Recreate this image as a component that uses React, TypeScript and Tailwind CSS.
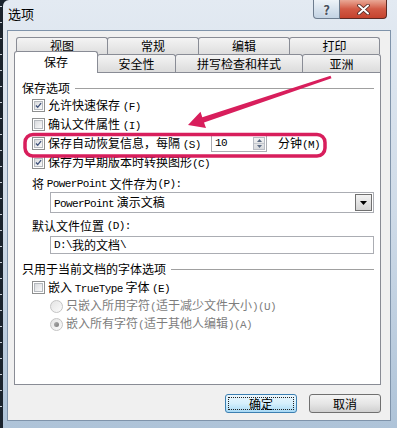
import type { ReactNode } from "react";

const ROW1 = [
  { label: "视图", w: 92 },
  { label: "常规", w: 92 },
  { label: "编辑", w: 92 },
  { label: "打印", w: 91 },
];

const ROW2 = [
  { label: "保存", w: 84, active: true },
  { label: "安全性", w: 79 },
  { label: "拼写检查和样式", w: 128 },
  { label: "亚洲", w: 79 },
];

// latin runs in the dialog font are half width (6px per char at 12px)
function Mono({ children }: { children: ReactNode }) {
  return <span className="font-['Liberation_Mono',monospace] text-[11px] tracking-[-0.6px]">{children}</span>;
}

function Checkbox({ checked }: { checked?: boolean }) {
  return (
    <span className="flex h-[13px] w-[13px] shrink-0 items-center justify-center border border-[#8e8f8f] bg-white">
      <span className="flex h-[9px] w-[9px] items-center justify-center border border-[#b5b9be] bg-gradient-to-br from-[#d9dbde] to-[#fafafa]">
        {checked && (
          <svg width="9" height="9" viewBox="0 0 9 9">
            <path d="M1.2 4.4 L3.5 6.8 L7.8 1.4" fill="none" stroke="#3f527a" strokeWidth="1.7" />
          </svg>
        )}
      </span>
    </span>
  );
}

function Radio({ selected }: { selected?: boolean }) {
  return (
    <span className="flex h-[13px] w-[13px] shrink-0 items-center justify-center rounded-full border border-[#c4c4c4] bg-gradient-to-br from-[#e4e4e4] to-[#fbfbfb]">
      {selected && <span className="h-[5px] w-[5px] rounded-full bg-gradient-to-br from-[#b0b0b0] to-[#7c7c7c]" />}
    </span>
  );
}

function CheckRow({ checked, children }: { checked?: boolean; children: ReactNode }) {
  return (
    <div className="flex h-[19px] items-center pl-[17px]">
      <Checkbox checked={checked} />
      <div className="ml-[3px] flex items-center">{children}</div>
    </div>
  );
}

function GroupLabel({ children }: { children: ReactNode }) {
  return (
    <div className="flex h-[16px] items-center gap-[5px] pl-[7px] pr-[6px]">
      <span>{children}</span>
      <span className="h-px flex-1 bg-[#a0a0a0]" />
    </div>
  );
}

function TitleBar() {
  return (
    <div className="flex h-[30px] items-start justify-between">
      <span className="mt-[7px] pl-[5px] text-[13px]">选项</span>
      <div className="mr-[10px] flex h-[19px]">
        <div className="flex w-[27px] items-center justify-center rounded-bl-[4px] border border-t-0 border-[#6d7c8e] bg-gradient-to-b from-[#eef3f8] via-[#d7e2ed] to-[#c3d3e3]">
          <span className="text-[13px] font-bold leading-none text-[#47505c] [text-shadow:0_0_2px_white]">?</span>
        </div>
        <div className="flex w-[47px] items-center justify-center rounded-br-[4px] border border-l-0 border-t-0 border-[#5b2a24] bg-gradient-to-b from-[#e9a896] via-[#d25a45] to-[#c4432e]">
          <svg width="13" height="11" viewBox="0 0 13 11">
            <path d="M2 1.5 L11 9.5 M11 1.5 L2 9.5" stroke="#4a2520" strokeWidth="3.6" strokeLinecap="round" />
            <path d="M2 1.5 L11 9.5 M11 1.5 L2 9.5" stroke="#ffffff" strokeWidth="2" strokeLinecap="round" />
          </svg>
        </div>
      </div>
    </div>
  );
}

function Tabs() {
  return (
    <div className="w-[367px]">
      <div className="ml-[2px] flex h-[17px]">
        {ROW1.map((tab, i) => (
          <div
            key={tab.label}
            style={{ width: tab.w }}
            className={`flex items-center justify-center rounded-t-[3px] border border-b-0 border-[#898c95] bg-gradient-to-b from-[#f4f4f4] to-[#dedede] ${
              i > 0 ? "-ml-px" : ""
            }`}
          >
            {tab.label}
          </div>
        ))}
      </div>
      <div className="flex h-[18px] items-start">
        {ROW2.map((tab, i) =>
          tab.active ? (
            <div
              key={tab.label}
              style={{ width: tab.w }}
              className="relative z-10 -mt-[3px] flex h-[22px] items-center justify-center rounded-t-[3px] border border-b-0 border-[#898c95] bg-white pb-[1px]"
            >
              {tab.label}
            </div>
          ) : (
            <div
              key={tab.label}
              style={{ width: tab.w }}
              className={`flex h-[18px] items-center justify-center rounded-t-[3px] border border-b-0 border-[#898c95] bg-gradient-to-b from-[#f4f4f4] to-[#dcdcdc] ${
                i > 0 ? "-ml-px" : ""
              }`}
            >
              {tab.label}
            </div>
          ),
        )}
      </div>
    </div>
  );
}

function Panel() {
  return (
    <div className="flex h-[313px] w-[367px] flex-col border border-[#898c95] bg-white pt-[7px]">
      <GroupLabel>保存选项</GroupLabel>
      <CheckRow checked>
        <span>
          允许快速保存 <Mono>(F)</Mono>
        </span>
      </CheckRow>
      <CheckRow>
        <span>
          确认文件属性 <Mono>(I)</Mono>
        </span>
      </CheckRow>
      <CheckRow checked>
        <span className="w-[163px] shrink-0">
          保存自动恢复信息，每隔 <Mono>(S)</Mono>
        </span>
        <div className="flex h-[17px] w-[56px] shrink-0 items-stretch border border-[#abadb3] bg-white">
          <span className="flex flex-1 items-center pl-[3px]">
            <Mono>10</Mono>
          </span>
          <div className="my-px mr-px flex w-[12px] flex-col border border-[#b8bcc4] bg-gradient-to-b from-[#f2f2f2] to-[#d8dadd]">
            <span className="flex flex-1 items-center justify-center border-b border-[#c4c8ce]">
              <svg width="5" height="3" viewBox="0 0 5 3">
                <path d="M0 3 L2.5 0 L5 3 Z" fill="#5b6b84" />
              </svg>
            </span>
            <span className="flex flex-1 items-center justify-center">
              <svg width="5" height="3" viewBox="0 0 5 3">
                <path d="M0 0 L2.5 3 L5 0 Z" fill="#5b6b84" />
              </svg>
            </span>
          </div>
        </div>
        <span className="ml-[11px] shrink-0 whitespace-nowrap">
          分钟<Mono>(M)</Mono>
        </span>
      </CheckRow>
      <CheckRow checked>
        <span>
          保存为早期版本时转换图形<Mono>(C)</Mono>
        </span>
      </CheckRow>

      <div className="mt-[4px] flex h-[16px] items-center pl-[17px]">
        将&nbsp;<Mono>PowerPoint</Mono>&nbsp;文件存为<Mono>(P):</Mono>
      </div>
      <div className="ml-[35px] flex h-[21px] w-[324px] items-center border border-[#abadb3] bg-white pl-[3px] pr-px">
        <span className="flex-1">
          <Mono>PowerPoint</Mono> 演示文稿
        </span>
        <span className="flex h-[17px] w-[17px] items-center justify-center border border-[#707070] bg-gradient-to-b from-[#f3f3f3] to-[#d4d4d4]">
          <svg width="7" height="4" viewBox="0 0 7 4">
            <path d="M0 0 L7 0 L3.5 4 Z" fill="#000" />
          </svg>
        </span>
      </div>

      <div className="mt-[5px] flex h-[16px] items-center pl-[17px]">
        默认文件位置&nbsp;<Mono>(D):</Mono>
      </div>
      <div className="ml-[35px] mt-[2px] flex h-[18px] w-[324px] items-center border border-[#abadb3] bg-white pl-[3px]">
        <Mono>D:\</Mono>我的文档<Mono>\</Mono>
      </div>

      <div className="mt-[7px]">
        <GroupLabel>只用于当前文档的字体选项</GroupLabel>
      </div>
      <div className="mt-[1px]">
        <CheckRow>
          <span>
            嵌入 <Mono>TrueType</Mono> 字体 <Mono>(E)</Mono>
          </span>
        </CheckRow>
      </div>
      <div className="flex h-[18px] items-center gap-[3px] pl-[35px] text-[#7d7d7d]">
        <Radio />
        <span>
          只嵌入所用字符<Mono>(</Mono>适于减少文件大小<Mono>)(U)</Mono>
        </span>
      </div>
      <div className="flex h-[18px] items-center gap-[3px] pl-[35px] text-[#7d7d7d]">
        <Radio selected />
        <span>
          嵌入所有字符<Mono>(</Mono>适于其他人编辑<Mono>)(A)</Mono>
        </span>
      </div>
    </div>
  );
}

function Buttons() {
  return (
    <div className="mt-[9px] flex w-[367px] justify-end gap-[12px]">
      <button
        type="button"
        className="flex h-[19px] w-[72px] items-center justify-center rounded-[3px] border border-[#3c7fb1] bg-gradient-to-b from-[#eaf6fd] via-[#d5effc] to-[#a7d9f5] p-[2px]"
      >
        <span className="flex h-full w-full items-center justify-center border border-dotted border-[#222]">确定</span>
      </button>
      <button
        type="button"
        className="flex h-[19px] w-[72px] items-center justify-center rounded-[3px] border border-[#707070] bg-gradient-to-b from-[#f4f4f4] via-[#e6e6e6] to-[#d0d0d0]"
      >
        取消
      </button>
    </div>
  );
}

export default function App() {
  return (
    <div className="relative flex h-[428px] w-[397px] overflow-hidden bg-[#1a232d] font-['Noto_Sans_CJK_SC',sans-serif] text-[12px] leading-none text-black">
      <div className="flex w-[3px] flex-col gap-[15px] pt-[6px]">
        {Array.from({ length: 26 }, (_, i) => (
          <span key={i} className="h-px w-[2px] bg-[#c8ced6]" />
        ))}
      </div>
      <div className="flex flex-1 flex-col rounded-tl-[6px] bg-gradient-to-b from-[#e3eaf2] via-[#cfdbe8] to-[#aec3d8]">
        <TitleBar />
        <div className="mb-[7px] ml-[4px] mr-[6px] flex flex-1 flex-col border border-[#7f93aa] bg-[#f0f0f0] pl-[6px] pt-[6px]">
          <Tabs />
          <Panel />
          <Buttons />
        </div>
      </div>

      <svg className="pointer-events-none absolute left-0 top-0" width="397" height="428" viewBox="0 0 397 428">
        <rect x="25" y="134.5" width="300" height="21.5" rx="8" fill="none" stroke="#d81e5c" strokeWidth="3.5" />
        <polygon
          points="188,125 206,128 204,122.5 331.5,78.2 330.5,75.8 202.3,117.3 200.5,111.8"
          fill="#d81e5c"
        />
      </svg>
    </div>
  );
}
